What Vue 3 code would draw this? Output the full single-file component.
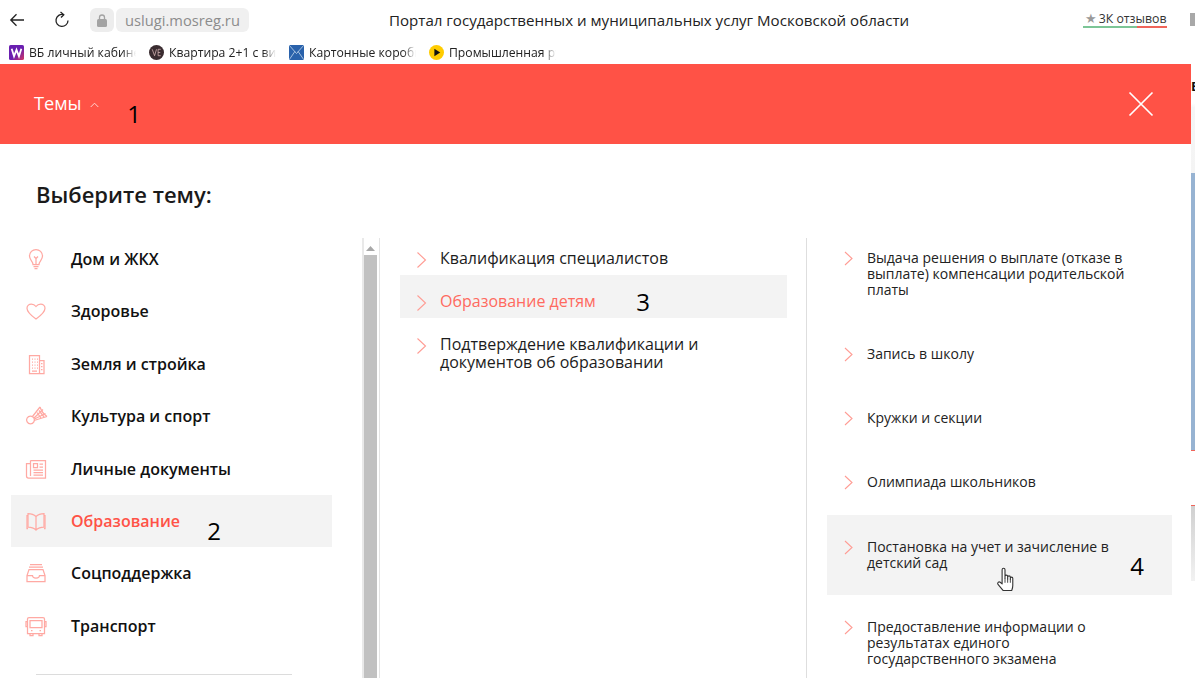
<script setup>
const bookmarks = [
  { label: 'ВБ личный кабинет', kind: 'wb' },
  { label: 'Квартира 2+1 с видом', kind: 've' },
  { label: 'Картонные коробки', kind: 'env' },
  { label: 'Промышленная рубрика', kind: 'play' },
]
const topics = [
  { label: 'Дом и ЖКХ', paths: ['M9 17.5c0-3-3.5-4.5-3.5-8.5a6.5 6.5 0 0 1 13 0c0 4-3.5 5.500-3.500 8.500z', 'M9.500 19.500h5M10.500 21.500h3M10 9.500l2 2 2-2M12 11.500v6'] },
  { label: 'Здоровье', paths: ['M12 20C7 16.500 3 13.500 3 9.300 3 6.500 5.200 5 7.300 5c2 0 3.600 1 4.700 2.500C13.100 6 14.700 5 16.700 5 18.800 5 21 6.500 21 9.300c0 4.200-4 7.200-9 10.700z'] },
  { label: 'Земля и стройка', paths: ['M5.500 3.500h10v18h-10zM15.500 8.500h4.500v13h-4.500z', 'M8 7h1M10.500 7h1M13 7h1M8 10h1M10.500 10h1M13 10h1M8 13h1M10.500 13h1M13 13h1M8 16h1M10.500 16h1M13 16h1M8 19h5M17 11.500h1.500M17 14.500h1.500M17 17.500h1.500'] },
  { label: 'Культура и спорт', paths: ['M6.500 12a3.900 3.900 0 1 0 .01 0z', 'M8.500 12.500L16 3M10 16.500L23 12.500M16 3c1 3 3.500 7 7 9.500', 'M10 14L19 5.500M10.500 15L21.500 9.500M13 8.500L17 14M15 6.500L20 13'] },
  { label: 'Личные документы', paths: ['M6.500 3.500h15v17.500h-17a2 2 0 0 1-2-2V6.500h4', 'M6.500 3.500v15.500', 'M9.500 6.500h4v4h-4zM15.500 7h3.500M15.500 10h3.500M9.500 13h9.500M9.500 15.500h9.500M9.500 18h9.500'] },
  { label: 'Образование', active: true, paths: ['M12 7.500C10 5.500 7 4.500 4 4.500v13.500c3 0 6 1 8 3 2-2 5-3 8-3V4.500c-3 0-6 1-8 3zM12 7.500V21', 'M4 6.500H3v13h1M20 6.500h1v13h-1'] },
  { label: 'Соцподдержка', paths: ['M6 3.500h12M5 6h14', 'M5 8.500h14l2 6v6H3v-6z', 'M3 14.500h5.500c0 2 1.500 2.500 3.500 2.500s3.500-.5 3.500-2.500H21'] },
  { label: 'Транспорт', paths: ['M5 3.500h14a1.500 1.500 0 0 1 1.500 1.500v14.500h-17V5A1.500 1.500 0 0 1 5 3.500z', 'M3.500 7.500H2v5h1.500M20.500 7.500H22v5h-1.500', 'M6 6.500h12v7H6zM6 19.500v2h3v-2M15 19.500v2h3v-2M7 16.500h1.500M15.500 16.500H17'] },
]
const middle = [
  { label: 'Квалификация специалистов' },
  { label: 'Образование детям', active: true },
  { label: 'Подтверждение квалификации и документов об образовании' },
]
const services = [
  { label: 'Выдача решения о выплате (отказе в выплате) компенсации родительской платы' },
  { label: 'Запись в школу' },
  { label: 'Кружки и секции' },
  { label: 'Олимпиада школьников' },
  { label: 'Постановка на учет и зачисление в детский сад', active: true },
  { label: 'Предоставление информации о результатах единого государственного экзамена' },
]
</script>

<template>
  <div class="page">
    <header class="browser">
      <div class="toolbar">
        <svg class="tool-icon back" width="16" height="16" viewBox="0 0 16 16"><path d="M15 8H2M7.500 2.300L1.800 8l5.700 5.700" /></svg>
        <svg class="tool-icon reload" width="16" height="18" viewBox="0 0 16 18"><path d="M9.500 3.600A6 6 0 1 0 14 9.500M6.500 1l3.300 2.700L7 6.500" /></svg>
        <span class="lock-chip">
          <svg width="10" height="13" viewBox="0 0 10 13"><path d="M2.500 6V3.500a2.500 2.500 0 0 1 5 0V6" fill="none" stroke="#a3a3a3" stroke-width="1.300" /><rect y="5" width="10" height="8" rx="1.500" fill="#a3a3a3" /></svg>
        </span>
        <span class="url-chip">uslugi.mosreg.ru</span>
        <span class="page-title">Портал государственных и муниципальных услуг Московской области</span>
        <span class="reviews"><span class="star">★</span>3К отзывов</span>
        <span class="bookmark-flag"></span>
      </div>
      <div class="bookmarks">
        <div v-for="b in bookmarks" :key="b.kind" class="bookmark">
          <svg v-if="b.kind === 'wb'" class="fav" viewBox="0 0 14 14"><defs><linearGradient id="wbg" x1="0" y1="0" x2="1" y2="1"><stop offset="0.550" stop-color="#6a1fb0" /><stop offset="1" stop-color="#d8385e" /></linearGradient></defs><rect width="14" height="14" rx="1.500" fill="url(#wbg)" /><path d="M2.500 3.500l2.200 7 2.300-6 2.300 6 2.200-7" fill="none" stroke="#fff" stroke-width="1.700" /></svg>
          <svg v-else-if="b.kind === 've'" class="fav" viewBox="0 0 14 14"><circle cx="7" cy="7" r="7" fill="#3a2c30" /><path d="M3 4l2.200 6L7 4M8.500 4v6M8.500 4h2.500M8.500 7h2M8.500 10H11" fill="none" stroke="#d9b8b8" stroke-width=".7" /></svg>
          <svg v-else-if="b.kind === 'env'" class="fav" viewBox="0 0 14 14"><rect width="14" height="14" fill="#2a62ab" /><path d="M0 0l7 8 7-8M0 14l5.500-8M14 14L8.500 6" fill="none" stroke="#cfe0f2" stroke-width=".7" /></svg>
          <svg v-else class="fav" viewBox="0 0 14 14"><circle cx="7" cy="7" r="7" fill="#ffcc00" /><path d="M5 3.500L10.500 7 5 10.500z" fill="#111" /></svg>
          <span class="bm-label">{{ b.label }}</span>
        </div>
      </div>
    </header>

    <div class="viewport">
      <main class="panel">
        <div class="red-bar">
          <div class="themes-toggle">
            <span>Темы</span>
            <svg width="9" height="6" viewBox="0 0 9 6"><path d="M.7 5L4.500 1.200 8.300 5" fill="none" stroke="#ffd5d1" stroke-width="1" /></svg>
          </div>
          <svg class="close" width="26" height="26" viewBox="0 0 26 26"><path d="M1.500 1.500l23 23M24.500 1.500l-23 23" fill="none" stroke="#fff" stroke-width="1.700" /></svg>
        </div>

        <h1 class="choose">Выберите тему:</h1>

        <div class="columns">
          <nav class="topics">
            <a v-for="t in topics" :key="t.label" class="topic" :class="{ active: t.active }">
              <svg class="topic-icon" width="24" height="24" viewBox="0 0 24 24"><path v-for="(d, i) in t.paths" :key="i" :d="d" /></svg>
              <span>{{ t.label }}</span>
            </a>
            <div class="topic-sep"></div>
          </nav>

          <div class="scrollbar">
            <svg class="sb-arrow" width="9" height="5" viewBox="0 0 9 5"><path d="M4.500 0L9 5H0z" fill="#a8a8a8" /></svg>
            <div class="sb-thumb"></div>
          </div>

          <div class="subtopics">
            <a v-for="m in middle" :key="m.label" class="subtopic" :class="{ active: m.active }">
              <svg class="chev" width="11" height="18" viewBox="0 0 11 18"><path d="M1.500 1.500L9.500 9l-8 7.500" /></svg>
              <span>{{ m.label }}</span>
            </a>
          </div>

          <div class="divider"></div>

          <div class="services">
            <a v-for="s in services" :key="s.label" class="service" :class="{ active: s.active }">
              <svg class="chev small" width="10" height="15" viewBox="0 0 10 15"><path d="M1 1l7 6.500L1 14" /></svg>
              <span>{{ s.label }}</span>
            </a>
          </div>
        </div>
      </main>

      <aside class="sliver">
        <div class="sl-a"><span>Е</span></div>
        <div class="sl-blue"></div>
        <div class="sl-white"></div>
        <div class="sl-grey"></div>
      </aside>
    </div>

    <span class="mark m1">1</span>
    <span class="mark m2">2</span>
    <span class="mark m3">3</span>
    <span class="mark m4">4</span>

    <svg class="hand" width="20" height="28" viewBox="0 0 18 25">
      <path d="M5.500 15V3.200a1.300 1.300 0 0 1 2.600 0V11V9.300a1.200 1.200 0 0 1 2.400 0V11.500V10a1.200 1.200 0 0 1 2.400 0v2V11a1.100 1.100 0 0 1 2.200 0v6.500c0 2-.5 3-1 4.500H6.500L1.800 16.500c-1-1.500.7-3 2-2l1.700 1.500z" fill="#fff" stroke="#333" stroke-width="1" stroke-linejoin="round" />
      <path d="M8.100 11v4M10.500 11.500V15M12.900 12v3" stroke="#333" stroke-width=".8" />
    </svg>
  </div>
</template>

<style>
html, body { margin: 0; overflow: hidden; background: #fff; }
</style>

<style scoped>
.page {
  position: relative;
  width: 1195px;
  height: 678px;
  overflow: hidden;
  background: #fff;
  font-family: "Open Sans", "Liberation Sans", sans-serif;
  color: #111;
}
.browser { height: 64px; display: flex; flex-direction: column; }
.toolbar { height: 40px; position: relative; display: flex; align-items: center; box-sizing: border-box; }
.tool-icon { fill: none; stroke: #222; stroke-width: 1.300; flex: none; }
.back { margin-left: 9px; }
.reload { margin-left: 29px; }
.lock-chip {
  margin-left: 20px; width: 24px; height: 24px; border-radius: 6px; background: #ededed;
  display: flex; align-items: center; justify-content: center; flex: none;
}
.url-chip {
  margin-left: 2px; width: 133px; height: 24px; border-radius: 6px; background: #f0f0f0;
  color: #8c8c8c; font-size: 14.700px; line-height: 24px; text-align: center; flex: none;
}
.page-title {
  margin-left: 140px; font-size: 15.100px; white-space: nowrap; color: #222; flex: none;
}
.reviews {
  position: absolute; left: 1083px; top: 10px; width: 84px; height: 18px; font-size: 12.300px; line-height: 17px;
  color: #333; white-space: nowrap; box-sizing: border-box; padding-left: 2px;
  border-bottom: 2px solid; border-image: linear-gradient(to right, #7cc596 64%, #f0655a 64%) 1;
}
.star { color: #9a9a9a; font-size: 13px; margin-right: 2px; font-family: "DejaVu Sans", sans-serif; }
.bookmark-flag { position: absolute; left: 1190px; top: 13px; width: 6px; height: 13px; background: #a8a8a8; }
.bookmarks { height: 24px; display: flex; padding-left: 9px; }
.bookmark { width: 140px; display: flex; align-items: center; gap: 5px; height: 24px; flex: none; }
.fav { width: 15px; height: 15px; flex: none; }
.bm-label {
  width: 107px; overflow: hidden; white-space: nowrap; font-size: 12.200px; color: #222;
  -webkit-mask-image: linear-gradient(to right, #000 88%, transparent 100%);
  mask-image: linear-gradient(to right, #000 88%, transparent 100%);
}

.viewport { display: flex; height: 614px; }
.panel { width: 1191px; flex: none; overflow: hidden; }
.red-bar {
  height: 80px; background: #ff5246; display: flex; align-items: center;
  justify-content: space-between; padding: 0 37px 0 34px; box-sizing: border-box;
}
.themes-toggle { display: flex; align-items: center; gap: 8px; color: #fff; font-size: 18.200px; font-weight: 400; margin-top: -2px; }
.themes-toggle svg { margin-top: 3px; }

.choose { margin: 35px 0 0 36px; font-size: 22px; line-height: 30px; font-weight: 600; color: #1a1a1a; }

.columns { display: flex; margin-top: 24px; height: 445px; align-items: flex-start; }
.topics { width: 321px; margin: -0.250px 0 0 11px; flex: none; }
.topic {
  height: 52.400px; display: flex; align-items: center; gap: 23px; padding-left: 13px;
  font-size: 16px; font-weight: 600; color: #111;
}
.topic.active { background: #f3f3f3; color: #ff5246; }
.topic-icon { fill: none; stroke: #ffa9a3; stroke-width: 1.250; flex: none; }
.topic-sep { height: 1px; background: #dcdcdc; margin: 22px 40px 0 25px; }

.scrollbar {
  width: 15px; margin: 5px 0 0 30px; height: 440px; flex: none; display: flex; flex-direction: column; align-items: flex-start;
  border-left: 2px solid #e9e9e9; border-right: 1px solid #e4e4e4; box-sizing: content-box;
}
.sb-arrow { margin: 8px 0 0 2px; }
.sb-thumb { width: 13px; flex: 1; margin-top: 4px; background: #c1c1c1; }

.subtopics { width: 387px; margin: -1px 0 0 20px; flex: none; }
.subtopic {
  display: flex; align-items: flex-start; gap: 13px; padding: 17px 30px 8px 16px;
  font-size: 16px; line-height: 18px; color: #1c1c1c; box-sizing: border-box;
}
.subtopic.active { background: #f3f3f3; color: #ff6a60; }
.chev { fill: none; stroke: #ff9c94; stroke-width: 1.100; flex: none; margin: 2px 0 -2px; }
.divider { width: 1px; height: 440px; margin: 5px 0 0 19px; background: #dedede; flex: none; }

.services { width: 345px; margin: -7px 0 0 20px; flex: none; }
.service {
  display: flex; align-items: flex-start; gap: 13px; padding: 24px 43px 24px 17px;
  font-size: 14px; line-height: 16px; color: #222; box-sizing: border-box;
}
.service.active { background: #f3f3f3; margin-top: 1px; }
.chev.small { margin: 1px 0 0; }

.sliver { width: 4px; flex: none; display: flex; flex-direction: column; overflow: hidden; }
.sl-a { height: 109px; position: relative; background: linear-gradient(#fff 36%, #f6f6f6 40%, #f4f4f4); }
.sl-a span { position: absolute; left: 0; top: 15px; font-size: 13px; font-weight: 700; color: #111; line-height: 14px; }
.sl-blue { height: 277px; background: #97b3d2; border-bottom: 1px solid #f0655a; box-sizing: content-box; }
.sl-white { height: 54px; background: #fff; border-bottom: 1px solid #f0655a; }
.sl-grey { height: 75px; background: linear-gradient(#d0d0d0, #f2f2f2); }

.mark { position: absolute; font-size: 24px; line-height: 28px; color: #000; width: 20px; text-align: center; }
.m1 { left: 124px; top: 100px; }
.m2 { left: 204px; top: 517px; }
.m3 { left: 633px; top: 288px; }
.m4 { left: 1127px; top: 552px; }
.hand { position: absolute; left: 996px; top: 566px; }
</style>
